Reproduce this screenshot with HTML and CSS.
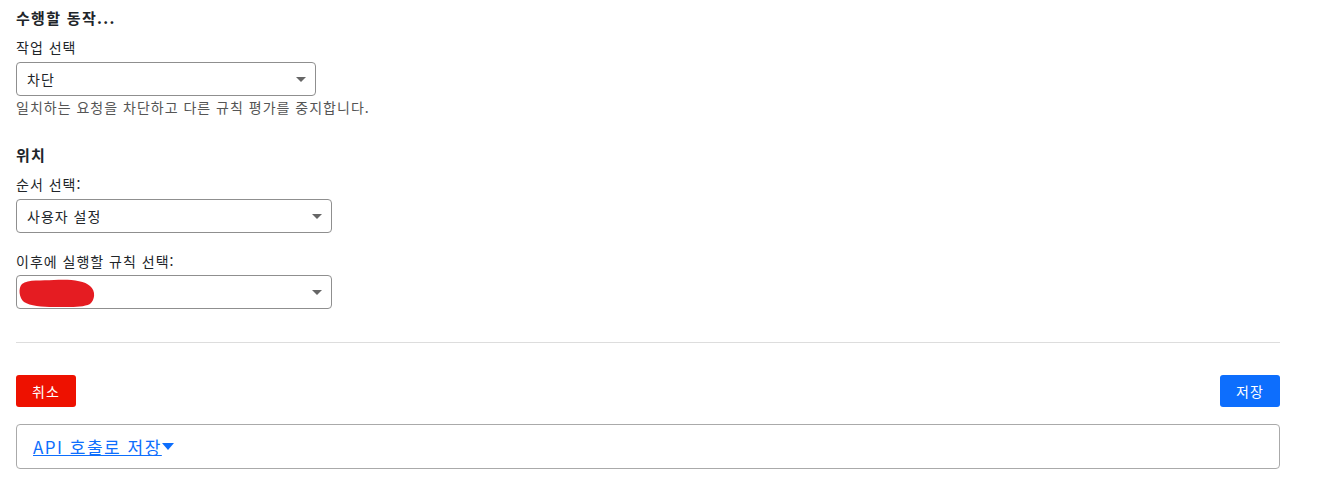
FILE: index.html
```html
<!DOCTYPE html>
<html lang="ko">
<head>
<meta charset="utf-8">
<link rel="stylesheet" href="styles.css">
</head>
<body>
<div class="page">
  <section class="group">
    <h3 class="group-title">수행할 동작...</h3>
    <label class="field-label">작업 선택</label>
    <div class="select sel-narrow"><span class="sel-text">차단</span><span class="caret"></span></div>
    <p class="help">일치하는 요청을 차단하고 다른 규칙 평가를 중지합니다.</p>
  </section>
  <section class="group group-pos">
    <h3 class="group-title">위치</h3>
    <label class="field-label">순서 선택:</label>
    <div class="select sel-wide"><span class="sel-text">사용자 설정</span><span class="caret"></span></div>
    <label class="field-label label-gap">이후에 실행할 규칙 선택:</label>
    <div class="select sel-wide">
      <svg class="redact" width="78" height="30" viewBox="0 0 78 30"><path d="M4 6 C10 1 24 3 36 2 C50 1 66 2 72 8 C78 13 77 22 72 26 C64 30 48 29 36 29 C24 29 12 28 6 24 C1 20 0 10 4 6 Z" fill="#e51c22"/></svg>
      <span class="caret"></span>
    </div>
  </section>
  <hr class="divider">
  <div class="actions">
    <button class="btn btn-cancel">취소</button>
    <button class="btn btn-save">저장</button>
  </div>
  <div class="api-box">
    <a class="api-link" href="#">API 호출로 저장</a><span class="api-caret"></span>
  </div>
</div>
</body>
</html>
```
FILE: styles.css
```css
* { box-sizing: border-box; }
body {
  margin: 0;
  background: #fff;
  font-family: "Noto Sans CJK KR", "Noto Sans", sans-serif;
  color: #212529;
}
.page {
  padding: 6px 38px 0 16px;
}
.group-title {
  margin: 0;
  font-size: 15px;
  font-weight: 700;
  line-height: 24px;
  letter-spacing: 1.3px;
}
.field-label {
  display: block;
  font-size: 14px;
  line-height: 20px;
  margin-top: 7px;
  margin-bottom: 5px;
  letter-spacing: 1px;
}
.label-gap { margin-top: 18px; margin-bottom: 4px; }
.select {
  display: flex;
  align-items: center;
  justify-content: space-between;
  height: 34px;
  border: 1px solid #8f8f8f;
  border-radius: 4px;
  padding: 0 10px 0 10px;
  font-size: 14px;
  letter-spacing: 1px;
}
.sel-narrow { width: 300px; }
.sel-wide { width: 316px; }
.caret {
  width: 0; height: 0;
  border-left: 5px solid transparent;
  border-right: 5px solid transparent;
  border-top: 5px solid #666;
  margin-right: -1px;
}
.redact {
  display: block;
  margin-left: -9px;
  margin-top: 1px;
}
.help {
  margin: 2px 0 0;
  font-size: 14px;
  line-height: 18px;
  color: #555;
  letter-spacing: 1px;
}
.group-pos { margin-top: 27px; }
.divider {
  border: 0;
  border-top: 1px solid #ddd;
  margin: 33px 0 0;
}
.actions {
  display: flex;
  justify-content: space-between;
  margin-top: 32px;
}
.btn {
  height: 32px;
  width: 60px;
  border: 0;
  border-radius: 3px;
  color: #fff;
  font-family: inherit;
  font-size: 14px;
  letter-spacing: 1px;
  cursor: pointer;
}
.btn-cancel { background: #ee1100; }
.btn-save { background: #0d6efd; }
.api-box {
  margin-top: 17px;
  height: 45px;
  border: 1px solid #aaa;
  border-radius: 4px;
  display: flex;
  align-items: center;
  padding-left: 16px;
}
.api-link {
  color: #0d6efd;
  font-size: 17px;
  letter-spacing: 1.5px;
  text-decoration: underline;
}
.api-caret {
  width: 0; height: 0;
  border-left: 6px solid transparent;
  border-right: 6px solid transparent;
  border-top: 7px solid #0d6efd;
  margin-left: 0;
}
```
